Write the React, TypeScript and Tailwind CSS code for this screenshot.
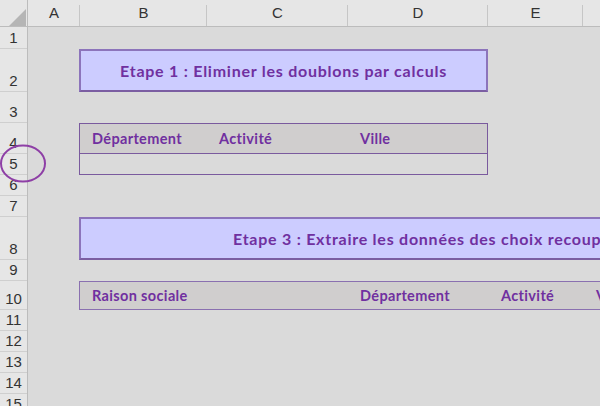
import React from 'react';

const columns = [
    { label: 'A', width: 52 },
    { label: 'B', width: 127 },
    { label: 'C', width: 141 },
    { label: 'D', width: 140 },
    { label: 'E', width: 95 },
    { label: '', width: 100 },
];

const rows = [
    { n: 1, h: 22 },
    { n: 2, h: 43 },
    { n: 3, h: 31 },
    { n: 4, h: 31 },
    { n: 5, h: 21 },
    { n: 6, h: 21 },
    { n: 7, h: 21 },
    { n: 8, h: 43 },
    { n: 9, h: 21 },
    { n: 10, h: 29 },
    { n: 11, h: 21 },
    { n: 12, h: 21 },
    { n: 13, h: 21 },
    { n: 14, h: 21 },
    { n: 15, h: 21 },
];

const purple = 'text-[#7030a0]';

const App: React.FC = () => {
    return (
        <div className="relative w-[600px] h-[406px] overflow-hidden bg-[#dadada] font-['Lato','Liberation_Sans',sans-serif]">
            {/* column headers */}
            <div className="flex h-[27px] bg-[#e6e6e6] border-b border-[#bcbcbc]">
                <div className="relative w-[28px] shrink-0 border-r border-[#bcbcbc]">
                    <svg className="absolute left-[9px] top-[9px]" width="17" height="17" viewBox="0 0 17 17">
                        <polygon points="17,0 17,17 0,17" fill="#b5b5b5" />
                    </svg>
                </div>
                {columns.map((c, i) => (
                    <div
                        key={i}
                        className="relative shrink-0 flex items-center justify-center text-[15px] text-[#333] font-['Liberation_Sans',sans-serif]"
                        style={{ width: c.width }}
                    >
                        {c.label}
                        <span className="absolute right-0 top-[5px] bottom-0 w-px bg-[#c6c6c6]" />
                    </div>
                ))}
            </div>

            <div className="flex">
                {/* row headers */}
                <div className="w-[28px] shrink-0 bg-[#e6e6e6] border-r border-[#bcbcbc] flex flex-col">
                    {rows.map((r) => (
                        <div
                            key={r.n}
                            className="shrink-0 box-border border-b border-[#cfcfcf] flex items-end justify-center pb-[1px] text-[15px] leading-[18px] text-[#333] font-['Liberation_Sans',sans-serif]"
                            style={{ height: r.h }}
                        >
                            {r.n}
                        </div>
                    ))}
                </div>

                {/* sheet */}
                <div className="flex flex-col pl-[51px] pt-[22px]">
                    <div className={`w-[409px] h-[43px] box-border bg-[#ccccff] border-2 border-[#8c74bb] border-b-[#7b5ea2] flex items-center justify-center text-[16px] tracking-[0.75px] font-bold ${purple}`}>
                        Etape 1 : Eliminer les doublons par calculs
                    </div>

                    <div className="h-[31px]" />

                    <div className="w-[409px] h-[52px] box-border border border-[#7a5a9e] flex flex-col">
                        <div className={`h-[30px] bg-[#d0cece] border-b border-[#7a5a9e] flex items-center text-[14.5px] tracking-[0.35px] font-bold ${purple}`}>
                            <span className="w-[127px] pl-[12px]">Département</span>
                            <span className="w-[141px] pl-[12px]">Activité</span>
                            <span className="pl-[12px]">Ville</span>
                        </div>
                        <div className="flex-1" />
                    </div>

                    <div className="h-[42px]" />

                    <div className={`w-[700px] h-[43px] box-border bg-[#ccccff] border-2 border-[#8c74bb] border-b-[#7b5ea2] flex items-center pl-[152px] text-[16px] tracking-[0.75px] font-bold whitespace-nowrap ${purple}`}>
                        Etape 3 : Extraire les données des choix recoupés
                    </div>

                    <div className="h-[21px]" />

                    <div className={`w-[700px] h-[29px] box-border bg-[#d0cece] border border-[#8a70b0] flex items-center text-[14.5px] tracking-[0.35px] font-bold whitespace-nowrap ${purple}`}>
                        <span className="w-[268px] pl-[12px]">Raison sociale</span>
                        <span className="w-[140px] pl-[12px]">Département</span>
                        <span className="w-[95px] pl-[13px]">Activité</span>
                        <span className="pl-[13px]">Ville</span>
                    </div>
                </div>
            </div>

            {/* annotation circle */}
            <svg className="absolute left-0 top-[144px]" width="48" height="40" viewBox="0 0 48 40">
                <ellipse cx="23" cy="19.5" rx="22" ry="18" fill="none" stroke="#8e3fa6" strokeWidth="2" />
            </svg>
        </div>
    );
};

export default App;
